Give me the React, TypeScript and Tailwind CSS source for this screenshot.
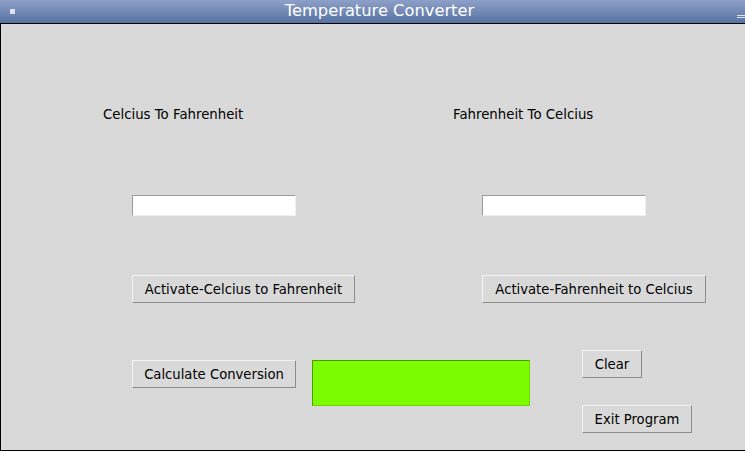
import React from 'react'

const font = { fontFamily: '"DejaVu Sans", sans-serif' }

function TkButton({ label, width }: { label: string; width: string }) {
  return (
    <button
      type="button"
      className={`${width} flex h-[28px] shrink-0 items-center justify-center border border-t-[#f4f4f4] border-l-[#f4f4f4] border-b-[#8c8c8c] border-r-[#8c8c8c] bg-[#d9d9d9] pt-[2px] text-[13.2px] leading-none text-black`}
    >
      {label}
    </button>
  )
}

function Entry() {
  return (
    <input
      type="text"
      className="ml-[29px] h-[21px] w-[164px] border border-t-[#9a9a9a] border-l-[#9a9a9a] border-b-[#f0f0f0] border-r-[#f0f0f0] bg-white outline-none"
    />
  )
}

export default function App() {
  return (
    <div className="h-[451px] w-[745px] overflow-hidden bg-[#d9d9d9]" style={font}>
      {/* Title bar */}
      <div className="relative flex h-[24px] items-center border-b border-black bg-gradient-to-b from-[#8ea0c9] to-[#5673a0]">
        <div className="absolute left-[10px] top-[9px] h-[5px] w-[5px] bg-[#e4e2f2]" />
        <div className="w-full pb-[1px] pl-[14px] text-center text-[16.3px] leading-none text-white">
          Temperature Converter
        </div>
        <div className="absolute right-0 top-[15px] flex w-[8px] flex-col gap-[1px]">
          <div className="h-[1px] bg-[#dfe4ef]" />
          <div className="h-[1px] bg-[#dfe4ef]" />
        </div>
      </div>

      {/* Body */}
      <div className="flex h-[427px] flex-col border-b border-l border-black pl-[102px] text-[13.3px] text-black">
        <div className="mt-[83px] flex leading-[16px]">
          <div className="w-[350px] shrink-0">Celcius To Fahrenheit</div>
          <div className="w-[350px] shrink-0">Fahrenheit To Celcius</div>
        </div>

        <div className="mt-[72px] flex">
          <div className="w-[350px] shrink-0">
            <Entry />
          </div>
          <div className="w-[350px] shrink-0">
            <Entry />
          </div>
        </div>

        <div className="mt-[59px] flex">
          <div className="w-[350px] shrink-0 pl-[29px]">
            <TkButton label="Activate-Celcius to Fahrenheit" width="w-[223px]" />
          </div>
          <div className="w-[350px] shrink-0 pl-[29px]">
            <TkButton label="Activate-Fahrenheit to Celcius" width="w-[224px]" />
          </div>
        </div>

        <div className="mt-[47px] flex items-start pl-[29px]">
          <div className="mt-[10px]">
            <TkButton label="Calculate Conversion" width="w-[164px]" />
          </div>
          <div className="ml-[16px] mt-[10px] h-[46px] w-[218px] shrink-0 border border-t-[#4f9a00] border-l-[#4f9a00] border-b-[#6fd400] border-r-[#6fd400] bg-[#7cfc00]" />
          <div className="ml-[52px] flex flex-col gap-[27px]">
            <TkButton label="Clear" width="w-[60px]" />
            <TkButton label="Exit Program" width="w-[110px]" />
          </div>
        </div>
      </div>
    </div>
  )
}
